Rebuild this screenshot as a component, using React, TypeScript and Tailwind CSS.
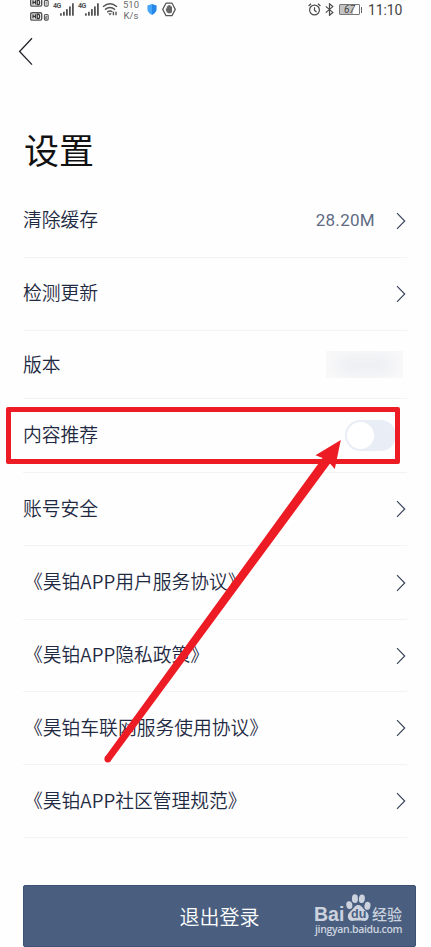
import type { ReactNode } from "react";

interface Row {
  id: string;
  label: string;
  height: string;
  labelClass: string;
  value?: ReactNode;
  arrow?: boolean;
}

function Chevron() {
  return (
    <svg className="h-[18px] w-[10px] shrink-0" viewBox="0 0 10 18" fill="none">
      <path d="M1 1.2 8.7 9 1 16.8" stroke="#38415a" strokeWidth="1.15" />
    </svg>
  );
}

function HdBadge({ sim }: { sim: string }) {
  return (
    <svg className="h-[9px] w-[19px]" viewBox="0 0 19 9">
      <rect x="0.7" y="0.7" width="11" height="7.4" rx="1.4" fill="#fff" stroke="#555" strokeWidth="1.4" />
      <path d="M3 2.2v4.4M5.4 2.2v4.4M3 4.4h2.4M7.2 2.2v4.4h.8q1.6 0 1.6-2.2T8 2.2z" fill="none" stroke="#333" strokeWidth="1.3" />
      <rect x="14.4" y="2.5" width="3.8" height="5.6" rx="1" fill="none" stroke="#555" strokeWidth="1.1" />
      <path d={sim === "1" ? "M16.2 3.5v3.2" : "M15.4 4.2h1.6v1h-1.5v1.4h1.7"} fill="none" stroke="#555" strokeWidth="0.8" />
    </svg>
  );
}

function Signal() {
  return (
    <div className="relative h-[15px] w-[21px]">
      <span className="absolute top-[1px] left-0 font-['Roboto',sans-serif] text-[7px] leading-[7px] font-bold tracking-[-0.6px] text-[#555]">
        4G
      </span>
      <svg className="h-[15px] w-[21px]" viewBox="0 0 21 15" fill="#555">
        <rect x="7" y="11.3" width="1.8" height="2.4" />
        <rect x="10" y="9.8" width="1.8" height="3.9" />
        <rect x="13" y="7.1" width="1.8" height="6.6" />
        <rect x="16" y="4.4" width="1.8" height="9.3" />
        <rect x="19" y="1.3" width="1.8" height="12.4" />
      </svg>
    </div>
  );
}

function StatusBar() {
  return (
    <header className="flex h-[22px] items-start justify-between overflow-hidden pr-[29px] pl-[30px] font-['Roboto',sans-serif]">
      <div className="flex">
        <div className="-mt-[2px] flex flex-col gap-[5px]">
          <HdBadge sim="1" />
          <HdBadge sim="2" />
        </div>
        <div className="mt-[2px] ml-[4px] flex gap-[4px]">
          <Signal />
          <Signal />
        </div>
        <svg className="mt-[2px] ml-[3px] h-[14px] w-[16px]" viewBox="0 0 16 14" fill="none" stroke="#555" strokeWidth="1.4">
          <path d="M1 4.8Q8-1.2 15 4.8M3 7.6Q8 3.4 13 7.6M5.2 10.1Q8 8.1 10.4 9.8" />
          <path d="m6.2 11.2 1.8 2.4 1.8-2.4z" fill="#555" stroke="none" />
          <path d="M11.4 9.8v3.4M14 9.8v3.4" strokeWidth="1.4" />
        </svg>
        <div className="-mt-px ml-[4px] w-[18px] text-center text-[9.5px] leading-[11px] text-[#6a6a6a]">
          <div>510</div>
          <div>K/s</div>
        </div>
        <svg className="mt-[4px] ml-[7px] h-[11px] w-[10px]" viewBox="0 0 10 11">
          <path d="M5 0 9.6 1.6V5Q9.6 8.6 5 11Z" fill="#2787e8" />
          <path d="M5 0 .4 1.6V5Q.4 8.6 5 11Z" fill="#45a5f8" />
        </svg>
        <svg className="mt-[2px] ml-[5px] h-[15px] w-[14px]" viewBox="0 0 14 15">
          <path d="M4 1.2h6l3.3 6.2L10 13.6H4L.7 7.4z" fill="#fff" stroke="#555" strokeWidth="1.2" strokeLinejoin="round" />
          <path d="M3.8 6.5h1V4.2h1V3.4h1V3h1v.6h1v.8h1.2v5.3q-.5 1.5-1.6 1.5H6.2Q4.4 10.6 3.8 8z" fill="#666" />
        </svg>
      </div>
      <div className="flex items-start text-[#444]">
        <svg className="mt-[3px] h-[13px] w-[13px]" viewBox="0 0 13 13" fill="none" stroke="#4b4b4b" strokeWidth="1.2">
          <circle cx="6.5" cy="7" r="4.9" />
          <path d="M6.5 4.2V7.2L8.5 9M.6 3 3 .8M12.4 3 10 .8" />
        </svg>
        <svg className="mt-[3px] ml-[4px] h-[13px] w-[9px]" viewBox="0 0 9 13" fill="none" stroke="#4b4b4b" strokeWidth="1.2">
          <path d="m.8 3.4 7 6L4.5 12.3V.8l3.3 2.8-7 6" />
        </svg>
        <div className="mt-[4px] ml-[5px] flex items-center">
          <div className="flex h-[11px] w-[21px] items-center justify-center rounded-[1px] border border-[#777] bg-[linear-gradient(90deg,#c4c4c4_67%,#fff_67%)] text-[10px] leading-[9px] italic">
            67
          </div>
          <div className="ml-px h-[6px] w-px bg-[#666]" />
        </div>
        <div className="ml-[6px] h-[20px] w-[34px] text-[14px] leading-[20px] tracking-[-0.1px] whitespace-nowrap">11:10</div>
      </div>
    </header>
  );
}

function Toggle() {
  return (
    <div className="flex h-[31px] w-[61px]">
      <div className="h-[31px] w-[51px] rounded-full bg-[#e9edf6] p-[2px]">
        <div className="size-[27px] rounded-full bg-white" />
      </div>
    </div>
  );
}

const rows: Row[] = [
  {
    id: "cache",
    label: "清除缓存",
    height: "h-[74px]",
    labelClass: "pb-[3px]",
    value: <span className="font-['Roboto',sans-serif] text-[17px] tracking-[0.3px] text-[#606b83]">28.20M</span>,
    arrow: true,
  },
  { id: "update", label: "检测更新", height: "h-[73px]", labelClass: "pb-[4px]", arrow: true },
  {
    id: "version",
    label: "版本",
    height: "h-[68px]",
    labelClass: "pb-px",
    value: (
      <div className="mr-[3px] h-[27px] w-[77px] overflow-hidden bg-[#f9f9fa]">
        <div className="mt-[5px] ml-[12px] h-[18px] w-[54px] bg-[#eceef1] blur-[7px]" />
      </div>
    ),
  },
  { id: "recommend", label: "内容推荐", height: "h-[74px]", labelClass: "pb-[4px]", value: <Toggle /> },
  { id: "account", label: "账号安全", height: "h-[73px]", labelClass: "pb-[3px]", arrow: true },
  { id: "terms", label: "《昊铂APP用户服务协议》", height: "h-[74px]", labelClass: "pb-[3px] pl-px", arrow: true },
  { id: "privacy", label: "《昊铂APP隐私政策》", height: "h-[72px]", labelClass: "pb-[3px] pl-px", arrow: true },
  { id: "network", label: "《昊铂车联网服务使用协议》", height: "h-[73px]", labelClass: "pb-[3px] pl-px", arrow: true },
  { id: "community", label: "《昊铂APP社区管理规范》", height: "h-[73px]", labelClass: "pb-[3px] pl-px", arrow: true },
];

function BaiduMark() {
  return (
    <div className="absolute top-[8px] left-[290px] h-[44px] w-[92px] text-left text-[#ccd3df]">
      <span className="absolute top-[12px] left-0 font-['Liberation_Sans',sans-serif] text-[19.5px] leading-[16px] font-bold">Bai</span>
      <svg className="absolute top-0 left-[31px] h-[28px] w-[27px]" viewBox="0 0 27 29" fill="#ccd3df">
        <ellipse cx="4" cy="11.5" rx="3.1" ry="4" transform="rotate(-12 4 11.5)" />
        <ellipse cx="9.8" cy="4.8" rx="3.1" ry="4.5" />
        <ellipse cx="17" cy="4.9" rx="3.1" ry="4.5" transform="rotate(6 17 4.9)" />
        <ellipse cx="22.8" cy="12.2" rx="3.1" ry="4.1" transform="rotate(12 22.8 12.2)" />
        <path d="M13.2 11.5c3 0 4.3 2.6 6.2 4.6 2 2 5 4 4.6 7.6-.4 3.4-3 4.5-6 4.1-3.2-.4-6.3-.4-9.5 0-3.2.4-5.7-.8-6-4.1-.3-3.4 2.7-5.5 4.7-7.6 1.9-2 3-4.6 6-4.6z" />
      </svg>
      <span className="absolute top-[14px] left-[37px] font-['Liberation_Sans',sans-serif] text-[12.5px] leading-[13px] font-bold text-[#4a5f80]">
        du
      </span>
      <span className="absolute top-[12px] left-[58px] text-[15px] leading-[16px] font-medium whitespace-nowrap">经验</span>
      <span className="absolute top-[28px] left-[1px] font-['Open_Sans',sans-serif] text-[10.5px] leading-[14px] font-semibold tracking-[-0.33px] whitespace-nowrap">
        jingyan.baidu.com
      </span>
    </div>
  );
}

export default function App() {
  return (
    <div className="relative h-[947px] w-[431px] overflow-hidden bg-[#fefefe] font-['Noto_Sans_CJK_SC',sans-serif]">
      <StatusBar />

      <nav className="h-[48px] pt-[15px] pl-[18px]">
        <svg className="h-[29px] w-[16px]" viewBox="0 0 16 29" fill="none">
          <path d="M14 1.2 1.6 14.5 14 27.6" stroke="#202228" strokeWidth="1.3" />
        </svg>
      </nav>

      <h1 className="h-[114px] pt-[54px] pl-[24px] text-[35px] leading-[50px] text-[#111]">设置</h1>

      <main className="mr-[24px] ml-[23px]">
        {rows.map((row) => (
          <div
            key={row.id}
            className={`flex items-center justify-between border-b border-[#f3f3f5] pr-px ${row.height}`}
          >
            <span className={`text-[18.8px] leading-7 font-[350] whitespace-nowrap text-[#1f2a42] ${row.labelClass}`}>
              {row.label}
            </span>
            <div className="flex items-center gap-[21px]">
              {row.value}
              {row.arrow && <Chevron />}
            </div>
          </div>
        ))}
      </main>

      <button className="relative mt-[47px] ml-[23px] flex h-[62px] w-[393px] items-center justify-center rounded-[2px] border border-[#3c5272] bg-[#4a5f80] text-[20px] text-white">
        <span className="pt-[2px] font-[350]">退出登录</span>
        <BaiduMark />
      </button>

      {/* highlight box and pointer over the recommendation switch */}
      <div className="absolute top-[407px] left-[6px] h-[57px] w-[394px] rounded-[2px] border-[5px] border-[#ed1c24]" />
      <svg className="absolute top-[430px] left-[95px] h-[340px] w-[255px]" viewBox="95 430 255 340" fill="#ed1c24">
        <circle cx="107.8" cy="759" r="3.4" />
        <path d="M105 757 322.5 458 315.5 455.3 340.8 440 334.8 469 330 463.5 110.6 761z" />
      </svg>
    </div>
  );
}
